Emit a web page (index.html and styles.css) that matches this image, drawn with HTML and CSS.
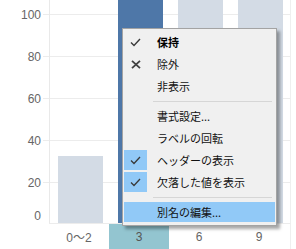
FILE: index.html
```html
<!DOCTYPE html>
<html lang="ja">
<head>
<meta charset="utf-8">
<link rel="stylesheet" href="styles.css">
</head>
<body>
<div class="view">
  <div class="chart">
    <div class="yaxis">
      <span class="ytick">100</span>
      <span class="ytick">80</span>
      <span class="ytick">60</span>
      <span class="ytick">40</span>
      <span class="ytick">20</span>
      <span class="ytick ytick-zero">0</span>
    </div>
    <div class="plot">
      <div class="col"><div class="bar" style="height:67px"></div></div>
      <div class="col"><div class="bar bar-selected" style="height:100%"></div></div>
      <div class="col"><div class="bar" style="height:100%"></div></div>
      <div class="col"><div class="bar" style="height:100%"></div></div>
    </div>
    <div class="corner"></div>
    <div class="xaxis">
      <div class="xlabel">0〜2</div>
      <div class="xlabel xlabel-selected">3</div>
      <div class="xlabel">6</div>
      <div class="xlabel">9</div>
    </div>
  </div>

  <div class="menu">
    <div class="item item-bold">
      <span class="check"><svg width="11" height="9" viewBox="0 0 11 9"><polyline points="1,4.5 4,7.5 10,1" fill="none" stroke="#3a3a3a" stroke-width="1.4"/></svg></span>
      <span class="label">保持</span>
    </div>
    <div class="item">
      <span class="check"><svg width="10" height="9" viewBox="0 0 10 9"><path d="M1 0.8 L9 8.2 M9 0.8 L1 8.2" stroke="#404040" stroke-width="1.8"/></svg></span>
      <span class="label">除外</span>
    </div>
    <div class="item">
      <span class="check"></span>
      <span class="label">非表示</span>
    </div>
    <div class="sep"></div>
    <div class="item">
      <span class="check"></span>
      <span class="label">書式設定...</span>
    </div>
    <div class="item">
      <span class="check"></span>
      <span class="label">ラベルの回転</span>
    </div>
    <div class="item item-checked">
      <span class="check"><svg width="11" height="9" viewBox="0 0 11 9"><polyline points="1,4.5 4,7.5 10,1" fill="none" stroke="#3a3a3a" stroke-width="1.3"/></svg></span>
      <span class="label">ヘッダーの表示</span>
    </div>
    <div class="item item-checked">
      <span class="check"><svg width="11" height="9" viewBox="0 0 11 9"><polyline points="1,4.5 4,7.5 10,1" fill="none" stroke="#3a3a3a" stroke-width="1.3"/></svg></span>
      <span class="label">欠落した値を表示</span>
    </div>
    <div class="sep"></div>
    <div class="item item-hover">
      <span class="check"></span>
      <span class="label">別名の編集...</span>
    </div>
  </div>
</div>
</body>
</html>
```

FILE: styles.css
```css
* { box-sizing: border-box; }

html, body {
  margin: 0;
  padding: 0;
  background: #ffffff;
}

body {
  width: 296px;
  height: 249px;
  overflow: hidden;
  font-family: "Liberation Sans", Arial, sans-serif;
}

.view {
  position: relative;
  width: 296px;
  height: 249px;
}

.chart {
  display: grid;
  grid-template-columns: 49px 242px;
  grid-template-rows: 224px 25px;
}

.yaxis {
  display: flex;
  flex-direction: column;
  align-items: flex-end;
  gap: 28px;
  padding-top: 8px;
  padding-right: 8px;
  background: repeating-linear-gradient(to bottom, transparent 0 14px, #ececec 14px 15px, transparent 15px 42px) right top / 6px 100% no-repeat;
}

.ytick {
  display: block;
  height: 14px;
  line-height: 14px;
  font-size: 12px;
  color: #666666;
}

.ytick-zero {
  margin-top: -9px;
}

.plot {
  display: flex;
  border-left: 1px solid #e9e9e9;
  border-right: 1px solid #efefef;
  border-bottom: 1px solid #ececec;
  background: repeating-linear-gradient(to bottom, transparent 0 14px, #ececec 14px 15px, transparent 15px 42px);
  overflow: hidden;
}

.col {
  flex: 0 0 60px;
  display: flex;
  align-items: flex-end;
  justify-content: center;
}

.bar {
  width: 45px;
  background: #d3dbe5;
}

.bar-selected {
  background: #4e77a8;
}

.xaxis {
  display: flex;
  border-right: 1px solid #efefef;
}

.xlabel {
  flex: 0 0 60px;
  display: flex;
  align-items: center;
  justify-content: center;
  font-size: 12px;
  color: #666666;
  font-family: "Liberation Sans", "Noto Sans CJK JP", sans-serif;
}

.xlabel-selected {
  background: #93c5d0;
  color: #555555;
}

/* context menu */
.menu {
  position: absolute;
  left: 122px;
  top: 28px;
  width: 155px;
  padding: 2px 1px;
  background: #f0f0f0;
  border: 1px solid #a3a3a3;
  box-shadow: 3px 3px 3px rgba(0, 0, 0, 0.35);
  font-family: "Noto Sans CJK JP", sans-serif;
  font-size: 11px;
  color: #111111;
}

.item {
  display: flex;
  align-items: center;
  height: 22px;
  padding: 1px 0;
  background-clip: content-box;
}

.item-bold .label {
  font-weight: bold;
  color: #000000;
}

.check {
  flex: 0 0 23px;
  height: 20px;
  margin-right: 10px;
  display: flex;
  align-items: center;
  justify-content: center;
}

.check svg {
  display: block;
}

.item-checked .check {
  background: #91c9f7;
}

.item-hover {
  background-color: #91c9f7;
}

.label {
  line-height: 20px;
  white-space: nowrap;
}

.sep {
  height: 8px;
  display: flex;
  align-items: center;
  padding-left: 29px;
  padding-right: 3px;
}

.sep::after {
  content: "";
  flex: 1;
  height: 1px;
  background: #d6d6d6;
}
```
